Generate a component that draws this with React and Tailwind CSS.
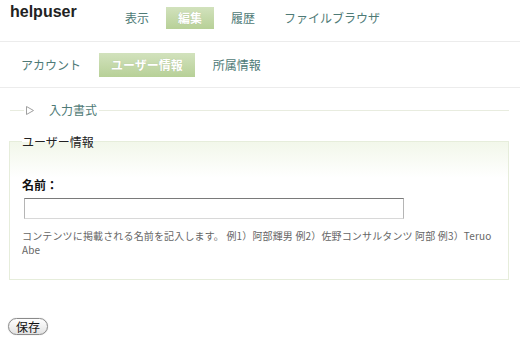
export default function App() {
  const tabOn =
    "px-3 text-white font-bold bg-[linear-gradient(to_bottom,#d2e2bd,#b7d097)] [text-shadow:0_0_1px_rgba(0,0,0,0.15)]";
  return (
    <div className="w-[520px] h-[354px] bg-white font-['Noto_Sans_CJK_JP',sans-serif] text-[#333] overflow-hidden">
      {/* top bar */}
      <div className="flex h-[42px] border-b border-[#ececec]">
        <div className="w-[113px] pl-[10px] pt-[2px] font-['Liberation_Sans',sans-serif] font-bold text-[16px] leading-[20px] text-[#222]">
          helpuser
        </div>
        <div className="flex gap-[5px] mt-[7px] h-[22px] text-[12px] leading-[22px] text-[#4e7a76]">
          <div className="px-3">表示</div>
          <div className={tabOn}>編集</div>
          <div className="px-3">履歴</div>
          <div className="px-3">ファイルブラウザ</div>
        </div>
      </div>
      {/* sub tabs */}
      <div className="flex items-center h-[46px] border-b border-[#ececec] pl-[9px] gap-[6px] text-[12px] leading-[24px] text-[#4e7a76]">
        <div className="px-3">アカウント</div>
        <div className={tabOn}>ユーザー情報</div>
        <div className="px-3">所属情報</div>
      </div>

      <div className="ml-[9px] w-[500px]">
        {/* collapsed section */}
        <div className="flex items-center mt-[14px] h-[16px]">
          <div className="w-[14px] h-px bg-[#e8ecdf] ml-[1px]" />
          <div className="flex items-center pl-[2px] pr-[2px]">
            <svg width="8" height="9" viewBox="0 0 8 9" className="block">
              <polygon points="0.5,0.5 7.5,4.5 0.5,8.5" fill="none" stroke="#a0a0a0" strokeWidth="1" />
            </svg>
            <span className="ml-[15px] text-[12px] leading-[16px] text-[#4e7a76]">入力書式</span>
          </div>
          <div className="flex-1 h-px bg-[#e8ecdf]" />
        </div>

        {/* fieldset */}
        <fieldset className="mt-[15px] border border-[#e6eddb] px-[12px] pb-[22px] bg-[linear-gradient(to_bottom,#f2f7ea,#ffffff_36px)]">
          <legend className="text-[12px] leading-[17px] text-[#222]">ユーザー情報</legend>
          <div className="pt-[27px] text-[12px] leading-[16px] font-bold text-[#111]">名前：</div>
          <div className="mt-[5px] ml-[2px] w-[380px] h-[21px] bg-white border border-t-[#7a7a7a] border-x-[#b5b5b5] border-b-[#d8d8d8]" />
          <p className="mt-[10px] text-[10px] leading-[14px] tracking-[0.15px] text-[#666]">
            コンテンツに掲載される名前を記入します。 例1）阿部輝男 例2）佐野コンサルタンツ 阿部 例3）Teruo Abe
          </p>
        </fieldset>
      </div>

      <div className="mt-[33px] pl-[8px]">
        <button className="h-[17px] px-[7px] rounded-full border border-[#8a8a8a] bg-[linear-gradient(to_bottom,#ffffff,#e2e2e2)] text-[12px] leading-[15px] text-[#111] shadow-[0_0_1px_rgba(0,0,0,0.3)]">
          保存
        </button>
      </div>
    </div>
  );
}
